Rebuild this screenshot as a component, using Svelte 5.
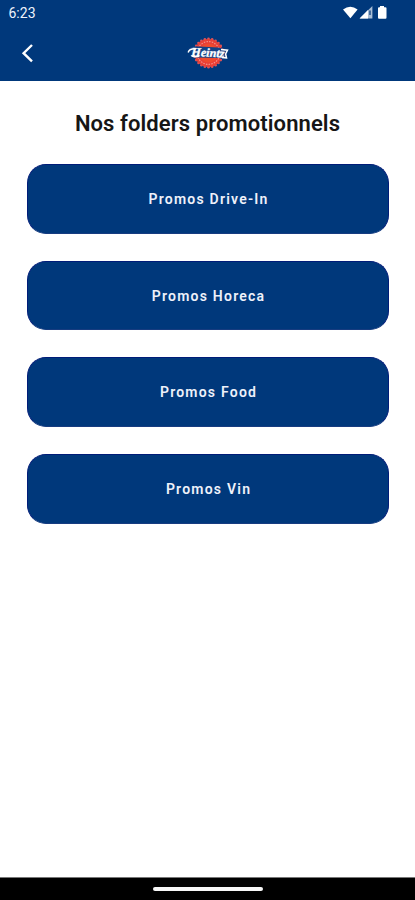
<script>
  const promos = ['Promos Drive-In', 'Promos Horeca', 'Promos Food', 'Promos Vin'];
  const teeth = Array.from({ length: 24 }, (_, i) => {
    const a = (i * Math.PI) / 12;
    return { x: 21.5 + 14.2 * Math.cos(a), y: 16 + 14.2 * Math.sin(a) };
  });
</script>

<div class="screen">
  <header>
    <div class="status">
      <span class="time">6:23</span>
      <svg class="signals" width="46" height="16" viewBox="0 0 46 16" aria-hidden="true">
        <path d="M0 4.5Q7.3-1 14.6 4.5L7.4 13.2Z" fill="#fff" />
        <path d="M29.4 1V13.6H16.6Z" fill="#a9bdd5" />
        <path d="M25 5V13.6H16.6Z" fill="#fff" />
        <path d="M27 5.5V10" stroke="#00387b" stroke-width="1.2" />
        <path d="M37 1H41V2.2H42.5Q43.5 2.2 43.5 3.2V12.4Q43.5 13.7 42.5 13.7H36Q35 13.7 35 12.4V3.2Q35 2.2 36 2.2H37Z" fill="#fff" />
      </svg>
    </div>
    <nav>
      <button class="back" aria-label="Retour">
        <svg width="14" height="22" viewBox="0 0 14 22">
          <path d="M12 3L3.6 11.2L12 19.4" fill="none" stroke="#fff" stroke-width="2.4" />
        </svg>
      </button>
      <svg class="logo" width="42" height="32" viewBox="0 0 42 32" role="img" aria-label="Heintz">
        {#each teeth as t}
          <circle cx={t.x} cy={t.y} r="1.3" fill="#d9555c" />
        {/each}
        <circle cx="21.5" cy="16" r="14" fill="#ea3f36" />
        <circle cx="21.5" cy="16" r="11.4" fill="none" stroke="#f2958c" stroke-width="1.1" stroke-dasharray="1.5 1.2" />
        <circle cx="21.5" cy="16" r="9.4" fill="#f04a2e" />
        <path d="M1 12Q6 8.5 12 9.5L31 10.5L40.8 12.5L39.5 17L40.5 22L36 22.5L32 21L9 20.5L4 19L5 16Z" fill="#164386" />
        <g transform="rotate(3 21 16)">
          <text x="21" y="19.6" text-anchor="middle" textLength="33" lengthAdjust="spacingAndGlyphs">Heintz</text>
        </g>
        <path d="M1.2 15.5Q2 11.5 9 11.8M4.5 18.8Q8 20.5 12 19M34 12.5L40.5 13.2L38.6 17L39.5 21L35 20.5" fill="none" stroke="#fff" stroke-width="1.5" />
      </svg>
    </nav>
  </header>

  <main>
    <h1>Nos folders promotionnels</h1>
    <div class="list">
      {#each promos as promo}
        <button class="promo">{promo}</button>
      {/each}
    </div>
  </main>

  <footer><span></span></footer>
</div>

<style>
  :global(body) { margin: 0; }
  .screen {
    width: 415px;
    height: 900px;
    display: flex;
    flex-direction: column;
    background: #fff;
    font-family: Roboto, "Noto Sans", sans-serif;
    overflow: hidden;
  }
  button { border: 0; padding: 0; font-family: inherit; }
  header { height: 81px; background: #00387b; flex: none; }
  .status {
    height: 26px;
    display: flex;
    justify-content: space-between;
    align-items: center;
    padding: 0 26px 0 8.5px;
    box-sizing: border-box;
  }
  .time { color: #eef3fb; font-size: 14px; line-height: 26px; }
  .signals { display: block; margin-top: -1px; }
  nav {
    height: 54px;
    display: grid;
    grid-template-columns: 1fr 42px 1fr;
    align-items: center;
  }
  .back {
    width: 14px;
    height: 22px;
    margin-left: 20px;
    background: none;
  }
  .back svg, .logo { display: block; }
  .logo text {
    font: italic 700 12px "Liberation Serif", serif;
    fill: #fff;
    stroke: #fff;
    stroke-width: 0.35px;
  }
  main { flex: 1; }
  h1 {
    margin: 28px 0 26px;
    height: 29px;
    line-height: 29px;
    text-align: center;
    font-size: 22px;
    font-weight: 600;
    letter-spacing: 0.1px;
    color: #161616;
  }
  .list {
    display: flex;
    flex-direction: column;
    gap: 26.8px;
    padding: 0 26px 0 26.5px;
  }
  .promo {
    height: 69.8px;
    box-sizing: border-box;
    border: 1px solid #001c78;
    border-bottom-color: #173c80;
    border-radius: 19px;
    background: #00387b;
    color: #eef1fa;
    font-size: 14px;
    font-weight: 600;
    letter-spacing: 1.22px;
    padding: 0.6px 0 0 1.6px;
  }
  footer {
    height: 23px;
    flex: none;
    box-sizing: border-box;
    border-top: 1px solid #777;
    background: #000;
    display: flex;
    justify-content: center;
    padding-top: 8.5px;
  }
  footer span { width: 110px; height: 4px; border-radius: 2px; background: #f7f7f7; }
</style>
